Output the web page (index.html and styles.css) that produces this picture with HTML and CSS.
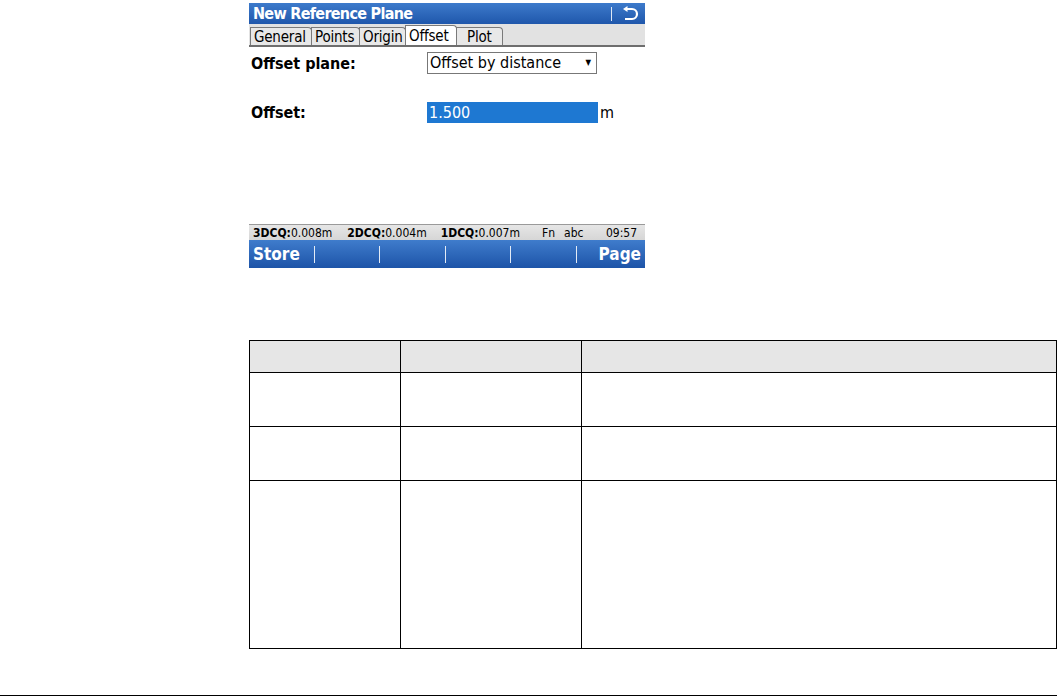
FILE: index.html
```html
<!DOCTYPE html>
<html lang="en">
<head>
  <meta charset="UTF-8">
  <title>New Reference Plane - Offset</title>
  <link rel="stylesheet" href="styles.css">
</head>
<body>
  <div class="page">
    <div class="screen">
      <div class="titlebar">
        <span class="title">New Reference Plane</span>
        <span class="back">
          <span class="sep"></span>
          <svg width="20" height="16" viewBox="0 0 20 16">
            <path d="M6 3 H12 A5 5 0 0 1 12 13 H5" fill="none" stroke="#fff" stroke-width="2.2"/>
            <path d="M3 3 L7.5 0 L7.5 6 Z" fill="#fff"/>
          </svg>
        </span>
      </div>
      <div class="tabs">
        <span class="tab t-general">General</span>
        <span class="tab t-points">Points</span>
        <span class="tab t-origin">Origin</span>
        <span class="tab t-offset active">Offset</span>
        <span class="tab t-plot">Plot</span>
      </div>
      <div class="content">
        <div class="field">
          <span class="label">Offset plane:</span>
          <span class="select">Offset by distance <span class="caret">&#9660;</span></span>
        </div>
        <div class="field">
          <span class="label">Offset:</span>
          <span class="input">1.500</span>
          <span class="unit">m</span>
        </div>
      </div>
      <div class="status">
        <span class="q1"><b>3DCQ:</b>0.008m</span>
        <span class="q2"><b>2DCQ:</b>0.004m</span>
        <span class="q3"><b>1DCQ:</b>0.007m</span>
        <span class="fn">Fn</span>
        <span class="abc">abc</span>
        <span class="time">09:57</span>
      </div>
      <div class="softkeys">
        <span class="key">Store</span>
        <span class="key"></span>
        <span class="key"></span>
        <span class="key"></span>
        <span class="key"></span>
        <span class="key right">Page</span>
      </div>
    </div>

    <table class="desc">
      <tr class="head">
        <th class="c1"></th>
        <th class="c2"></th>
        <th class="c3"></th>
      </tr>
      <tr class="short"><td></td><td></td><td></td></tr>
      <tr class="short"><td></td><td></td><td></td></tr>
      <tr class="tall"><td></td><td></td><td></td></tr>
    </table>
  </div>
  <div class="footer"></div>
</body>
</html>
```

FILE: styles.css
```css
body {
  margin: 0;
  background: #fff;
  font-family: "DejaVu Sans Condensed", "DejaVu Sans", sans-serif;
  color: #000;
}

.page {
  padding-left: 249px;
  height: 695px;
}

.screen {
  width: 396px;
  padding-top: 3px;
}

.titlebar {
  height: 21px;
  background: linear-gradient(#3d7acb, #1f57ab);
  color: #fff;
  display: flex;
  align-items: center;
  justify-content: space-between;
  padding: 0 5px 0 4px;
}

.title {
  font-weight: bold;
  font-size: 16px;
  letter-spacing: -0.7px;
}

.back {
  display: flex;
  align-items: center;
  gap: 8px;
}

.back .sep {
  width: 1px;
  height: 14px;
  background: #dfe8f5;
}

.tabs {
  height: 21px;
  background: #e2e2e2;
  border-bottom: 2px solid #6e6e6e;
  display: flex;
  align-items: flex-end;
  padding-left: 1px;
}

.tab {
  font-size: 15px;
  letter-spacing: -0.2px;
  height: 18px;
  line-height: 18px;
  padding: 0 0 0 3px;
  border: 1px solid #7a7a7a;
  border-bottom: none;
  border-radius: 0 4px 0 0;
  background: #e8e8e8;
  margin-right: -1px;
  box-sizing: border-box;
}

.t-general { width: 62px; }
.t-points { width: 49px; }
.t-origin { width: 47px; }
.t-offset { width: 52px; }
.t-plot { width: 47px; padding-left: 10px; }

.tab.active {
  background: #fff;
  height: 20px;
  line-height: 20px;
}

.content {
  height: 172px;
  padding-top: 5px;
}

.field {
  display: flex;
  align-items: center;
  height: 22px;
  margin-bottom: 27px;
}

.label {
  width: 176px;
  font-weight: bold;
  font-size: 16px;
  padding-left: 2px;
}

.select {
  width: 166px;
  height: 20px;
  border: 1px solid #777;
  font-size: 16px;
  line-height: 20px;
  padding-left: 2px;
  display: flex;
  justify-content: space-between;
}

.caret {
  font-size: 8px;
  padding-right: 5px;
}

.input {
  width: 169px;
  height: 21px;
  line-height: 21px;
  background: #1e78d2;
  color: #fff;
  font-size: 16px;
  padding-left: 2px;
}

.unit {
  font-size: 16px;
  margin-left: 2px;
}

.status {
  height: 15px;
  background: linear-gradient(#e6e6e6, #d6d6d6);
  border-top: 1px solid #9a9a9a;
  display: flex;
  align-items: center;
  font-size: 12px;
  padding: 0 8px 0 4px;
}

.status .q2 { margin-left: 15px; }
.status .q3 { margin-left: 14px; }
.status .fn { margin-left: 22px; }
.status .abc { margin-left: 9px; }
.status .time { margin-left: auto; }

.softkeys {
  height: 28px;
  background: linear-gradient(#3f7ccc, #1d54a8);
  display: flex;
  align-items: center;
}

.key {
  flex: 1;
  height: 17px;
  line-height: 17px;
  border-right: 1px solid #e3ebf6;
  color: #fff;
  font-weight: bold;
  font-size: 17px;
  padding-left: 4px;
}

.key.right {
  border-right: none;
  text-align: right;
  padding-right: 4px;
}

.desc {
  margin-top: 72px;
  width: 808px;
  border-collapse: collapse;
}

.desc th,
.desc td {
  border: 1.5px solid #000;
  padding: 0;
}

.desc .head {
  height: 32px;
  background: #e6e6e6;
}

.desc .c1 { width: 150px; }
.desc .c2 { width: 180px; }

.desc .short {
  height: 54px;
}

.desc .tall {
  height: 168px;
}

.footer {
  border-top: 1.5px solid #000;
}
```
